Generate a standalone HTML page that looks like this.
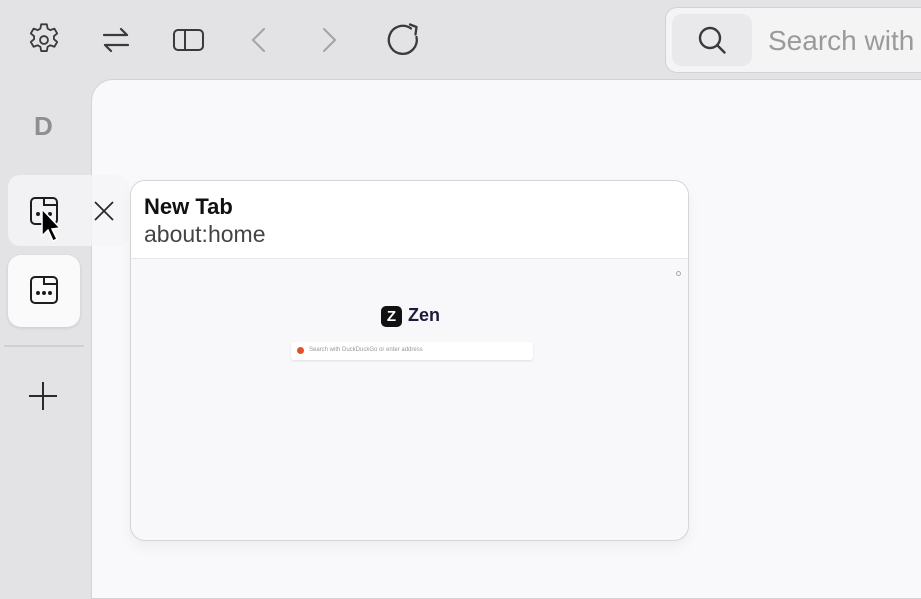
<!DOCTYPE html>
<html><head><meta charset="utf-8"><style>
*{margin:0;padding:0;box-sizing:border-box}
body{width:921px;height:586px;overflow:hidden;background:#e3e3e6;font-family:"Liberation Sans",sans-serif;position:relative}
.abs{position:absolute}
svg{position:absolute;overflow:visible}
</style></head><body>
<svg style="left:28px;top:24px" width="32" height="32" viewBox="2.3 2.3 19.4 19.4" fill="none" stroke="#3a3a3d" stroke-width="1.1" stroke-linejoin="round"><path d="M10.3 2.5h3.4l.5 2.6 1.6.9 2.5-.9 1.7 2.9-2 1.7v1.8l2 1.7-1.7 2.9-2.5-.9-1.6.9-.5 2.6h-3.4l-.5-2.6-1.6-.9-2.5.9-1.7-2.9 2-1.7v-1.8l-2-1.7 1.7-2.9 2.5.9 1.6-.9z"/><circle cx="12" cy="12" r="2.4"/></svg>
<svg style="left:100px;top:24px" width="32" height="32" viewBox="0 0 32 32" fill="none" stroke="#3a3a3d" stroke-width="2.2" stroke-linecap="round" stroke-linejoin="round"><path d="M4 11h23M21 5l6 6M28 21H5M11 27l-6-6"/></svg>
<div class="abs" style="left:173px;top:29px;width:31px;height:22px;border:2.2px solid #3a3a3d;border-radius:5px"><div class="abs" style="left:9px;top:0;width:2.2px;height:18px;background:#3a3a3d"></div></div>
<svg style="left:250px;top:28px" width="16" height="24" viewBox="0 0 16 24" fill="none" stroke="#a3a3a6" stroke-width="2" stroke-linecap="round"><path d="M14 1L3 12l11 11"/></svg>
<svg style="left:322px;top:28px" width="16" height="24" viewBox="0 0 16 24" fill="none" stroke="#a3a3a6" stroke-width="2" stroke-linecap="round"><path d="M2 1l11 11L2 23"/></svg>
<svg style="left:387px;top:23px" width="34" height="34" viewBox="0 0 34 34" fill="none" stroke="#3a3a3d" stroke-width="2.3" stroke-linecap="round" stroke-linejoin="round"><path d="M29.5 14A14 14 0 1 1 24 5.5"/><path d="M23 1.5l6.5 2.5-1 7.5"/></svg>
<div class="abs" style="left:665px;top:7px;width:270px;height:66px;background:#f4f4f5;border:1px solid #d2d2d5;border-radius:12px"></div>
<div class="abs" style="left:672px;top:14px;width:80px;height:52px;background:#e9e9eb;border-radius:10px"></div>
<svg style="left:697px;top:25px" width="32" height="32" viewBox="0 0 32 32" fill="none" stroke="#3a3a3d" stroke-width="2.4" stroke-linecap="round"><circle cx="13" cy="13" r="10"/><path d="M20.5 20.5l7 7"/></svg>
<div class="abs" style="left:768px;top:25px;font-size:28px;color:#9a9a9d;white-space:nowrap">Search with</div>
<div class="abs" style="left:91px;top:79px;width:840px;height:520px;background:#f9f9fb;border:1px solid #d3d3d6;border-radius:22px 0 0 0"></div>
<div class="abs" style="left:34px;top:111px;font-size:26px;font-weight:bold;color:#8e8e91">D</div>
<div class="abs" style="left:8px;top:175px;width:121px;height:71px;background:rgba(245,245,248,0.8);border-radius:12px"></div>
<div class="abs" style="left:8px;top:255px;width:72px;height:72px;background:#fafafa;border-radius:13px;box-shadow:0 1px 3px rgba(0,0,0,0.12)"></div>
<svg style="left:30px;top:197px" width="28" height="28" viewBox="0 0 28 28" fill="none" stroke="#1d1d1f" stroke-width="2"><rect x="1" y="1" width="26" height="26" rx="4"/><path d="M14 1v7H27"/><circle cx="8" cy="17" r="1" fill="#1d1d1f"/><circle cx="14" cy="17" r="1" fill="#1d1d1f"/><circle cx="20" cy="17" r="1" fill="#1d1d1f"/></svg>
<svg style="left:30px;top:276px" width="28" height="28" viewBox="0 0 28 28" fill="none" stroke="#1d1d1f" stroke-width="2"><rect x="1" y="1" width="26" height="26" rx="4"/><path d="M14 1v7H27"/><circle cx="8" cy="17" r="1" fill="#1d1d1f"/><circle cx="14" cy="17" r="1" fill="#1d1d1f"/><circle cx="20" cy="17" r="1" fill="#1d1d1f"/></svg>
<svg style="left:41px;top:208px" width="20" height="36" viewBox="0 0 20 36"><path d="M1 1v27l6-6 5 11 4-2-5-10 8-1z" fill="#000" stroke="#fff" stroke-width="1.5"/></svg>
<svg style="left:94px;top:201px" width="20" height="20" viewBox="0 0 20 20" stroke="#2a2a2c" stroke-width="1.8"><path d="M1 1l18 18M19 1L1 19"/></svg>
<div class="abs" style="left:4px;top:345px;width:80px;height:2px;background:#d0d0d3"></div>
<svg style="left:29px;top:382px" width="28" height="28" viewBox="0 0 28 28" stroke="#2a2a2c" stroke-width="2"><path d="M14 0v28M0 14h28"/></svg>
<div class="abs" style="left:130px;top:180px;width:559px;height:361px;background:#f8f8fa;border:1.5px solid #d5d5d9;border-radius:15px;overflow:hidden;box-shadow:0 6px 14px rgba(0,0,0,0.05)">
 <div style="height:78px;background:#fff;border-bottom:1.5px solid #e6e6e9;padding:13px 0 0 13px">
  <div style="font-size:22px;font-weight:bold;color:#111">New Tab</div>
  <div style="font-size:23px;color:#444;margin-top:1px">about:home</div>
 </div>
 <div class="abs" style="left:545px;top:90px;width:5px;height:5px;border:1px solid #aaa;border-radius:50%"></div>
 <div class="abs" style="left:250px;top:125px;width:21px;height:21px;background:#111;border-radius:5px;color:#fff;font-size:15px;font-weight:bold;text-align:center;line-height:21px">Z</div>
 <div class="abs" style="left:277px;top:124px;font-size:18px;font-weight:bold;color:#21183a">Zen</div>
 <div class="abs" style="left:160px;top:161px;width:242px;height:18px;background:#fff;border-radius:3px;box-shadow:0 1px 2px rgba(0,0,0,0.1)">
  <div class="abs" style="left:6px;top:5px;width:7px;height:7px;background:#e0522e;border-radius:50%"></div>
  <div class="abs" style="left:18px;top:5px;font-size:6px;color:#999;white-space:nowrap">Search with DuckDuckGo or enter address</div>
 </div>
</div>
</body></html>
